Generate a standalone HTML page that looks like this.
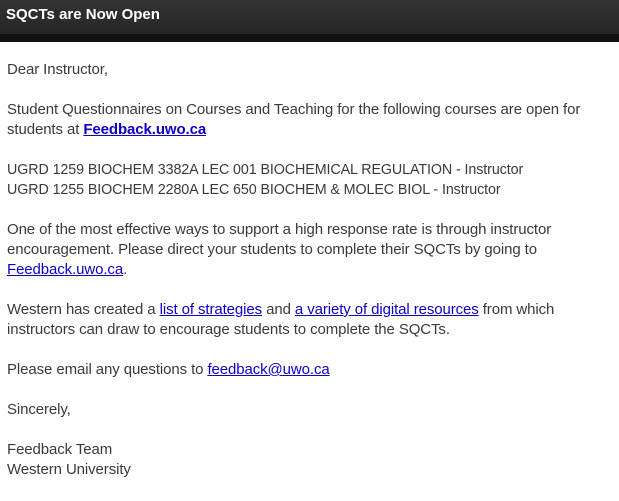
<!DOCTYPE html>
<html><head><style>
html,body{margin:0;padding:0;width:619px;height:501px;overflow:hidden;background:#fff}
.hdr{height:34px;background:linear-gradient(#333,#262626);color:#fff;font:bold 15px "Liberation Sans",sans-serif;line-height:30px;padding-left:6px}
.band{height:8px;background:#111}
.body{padding:0 0 0 7px;font-family:"Liberation Sans",sans-serif;font-size:15px;color:#3a3a3a;line-height:20px;white-space:nowrap;letter-spacing:-0.1px}
.body p{margin:0}
.caps{font-size:14.3px}
.sp{height:20px}
a{color:#0b00c8}
b a{font-weight:bold}
</style></head><body>
<div class="hdr">SQCTs are Now Open</div>
<div class="band"></div>
<div class="body" style="padding-top:18px">
<p>Dear Instructor,</p>
<div class="sp"></div>
<p>Student Questionnaires on Courses and Teaching for the following courses are open for</p>
<p>students at <b><a href="#">Feedback.uwo.ca</a></b></p>
<div class="sp"></div>
<p class="caps">UGRD 1259 BIOCHEM 3382A LEC 001 BIOCHEMICAL REGULATION - Instructor</p>
<p class="caps">UGRD 1255 BIOCHEM 2280A LEC 650 BIOCHEM &amp; MOLEC BIOL - Instructor</p>
<div class="sp"></div>
<p>One of the most effective ways to support a high response rate is through instructor</p>
<p>encouragement. Please direct your students to complete their SQCTs by going to</p>
<p><a href="#">Feedback.uwo.ca</a>.</p>
<div class="sp"></div>
<p>Western has created a <a href="#">list of strategies</a> and <a href="#">a variety of digital resources</a> from which</p>
<p>instructors can draw to encourage students to complete the SQCTs.</p>
<div class="sp"></div>
<p>Please email any questions to <a href="#">feedback@uwo.ca</a></p>
<div class="sp"></div>
<p>Sincerely,</p>
<div class="sp"></div>
<p>Feedback Team</p>
<p>Western University</p>
</div>
</body></html>
